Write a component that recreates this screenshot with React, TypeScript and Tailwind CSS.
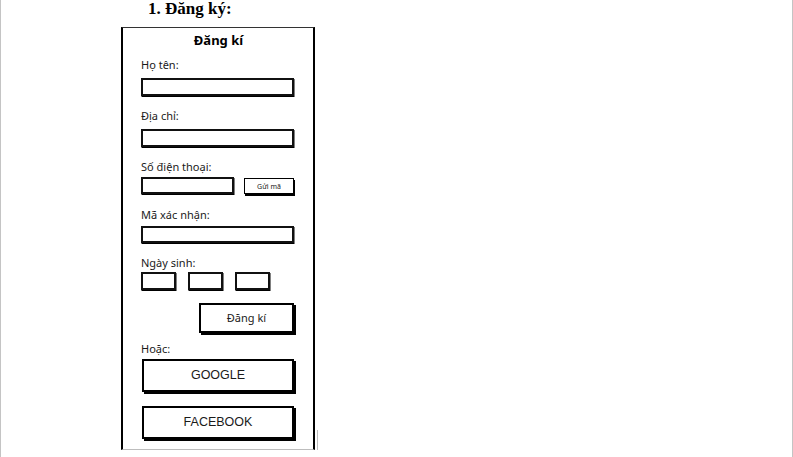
import React from "react";

const sketchFont = { fontFamily: '"Noto Sans", "DejaVu Sans", sans-serif' };
const arial = { fontFamily: '"Liberation Sans", Arial, sans-serif' };

function Label({ children, mt }: { children: React.ReactNode; mt: string }) {
  return (
    <div className={`${mt} h-[14px] text-[11px] leading-[14px] text-[#1a1a1a]`}>{children}</div>
  );
}

export default function App() {
  return (
    <div className="w-[793px] h-[457px] bg-white border-l border-r border-[#c4c4c4] overflow-hidden">
      <div
        className="pl-[147px] pt-[0px] h-[27px] text-[17px] leading-[18px] font-bold text-black"
        style={{ fontFamily: '"Liberation Serif", "Times New Roman", serif' }}
      >
        1. Đăng ký:
      </div>
      <div className="flex">
        <div className="ml-[120px] w-[194px] h-[423px] border-t border-t-[#333] border-l-2 border-r-2 border-black border-b border-b-[#bdbdbd] flex flex-col pl-[18px] pr-[17px]" style={sketchFont}>
          <div className="mt-[2px] h-[20px] text-center text-[13px] leading-[20px] font-bold text-black">Đăng kí</div>
          <Label mt="mt-[8px]">Họ tên:</Label>
          <div className="mt-[6px] h-[18px] w-[153px] border-2 border-[#111] shadow-[0.5px_1px_0_#000]" />
          <Label mt="mt-[13px]">Địa chỉ:</Label>
          <div className="mt-[6px] h-[18px] w-[153px] border-2 border-[#111] shadow-[0.5px_1px_0_#000]" />
          <Label mt="mt-[13px]">Số điện thoại:</Label>
          <div className="mt-[3px] h-[17px] flex">
            <div className="w-[93px] h-[17px] border-2 border-[#111] shadow-[0.5px_1px_0_#000]" />
            <div className="ml-[10px] w-[50px] h-[16px] mt-[1px] border-[1.5px] border-black shadow-[1px_2px_0_#000] flex items-center justify-center text-[7px] leading-none text-[#222]">
              Gửi mã
            </div>
          </div>
          <Label mt="mt-[14px]">Mã xác nhận:</Label>
          <div className="mt-[4px] h-[17px] w-[153px] border-2 border-[#111] shadow-[0.5px_1px_0_#000]" />
          <Label mt="mt-[13px]">Ngày sinh:</Label>
          <div className="mt-[2px] h-[18px] flex gap-[12px]">
            <div className="w-[35px] h-[18px] border-2 border-[#111] shadow-[0.5px_1px_0_#000]" />
            <div className="w-[35px] h-[18px] border-2 border-[#111] shadow-[0.5px_1px_0_#000]" />
            <div className="w-[35px] h-[18px] border-2 border-[#111] shadow-[0.5px_1px_0_#000]" />
          </div>
          <div className="mt-[13px] ml-[58px] w-[95px] h-[30px] border-2 border-black shadow-[2px_2px_0_#000] flex items-center justify-center text-[11px] text-[#1a1a1a]">
            Đăng kí
          </div>
          <Label mt="mt-[9px]">Hoặc:</Label>
          <div className="mt-[3px] ml-[1px] w-[152px] h-[33px] border-2 border-black shadow-[2px_2px_0_#000] flex items-center justify-center text-[12.5px] text-[#1a1a1a]" style={arial}>
            GOOGLE
          </div>
          <div className="mt-[14px] ml-[1px] w-[152px] h-[33px] border-2 border-black shadow-[2px_2px_0_#000] flex items-center justify-center text-[12.5px] text-[#1a1a1a]" style={arial}>
            FACEBOOK
          </div>
        </div>
        <div className="ml-[2px] mt-[403px] w-px h-[20px] bg-[#bdbdbd]" />
      </div>
    </div>
  );
}
